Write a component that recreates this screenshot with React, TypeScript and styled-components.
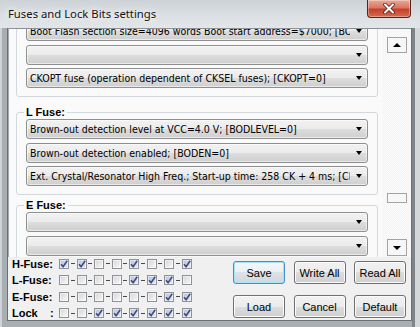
import React from "react";
import styled, { createGlobalStyle } from "styled-components";

const GlobalStyle = createGlobalStyle`
  *, *::before, *::after { box-sizing: border-box; }
  html, body { margin: 0; padding: 0; }
  body {
    width: 420px;
    height: 327px;
    overflow: hidden;
    font-family: "Liberation Sans", Arial, sans-serif;
    font-size: 11px;
    color: #000;
  }
`;

const Window = styled.div`
  width: 420px;
  height: 327px;
  display: flex;
  flex-direction: column;
  background: #aab0b6;
`;

const TitleBar = styled.div`
  height: 28px;
  flex: none;
  display: flex;
  align-items: flex-start;
  justify-content: space-between;
  padding: 0 9px 0 8px;
  background: linear-gradient(to bottom, #cdd2d7 0%, #dbdfe3 55%, #e3e6e9 100%);
`;

const Title = styled.div`
  font-family: "Noto Sans", "Open Sans", sans-serif;
  font-size: 11.3px;
  line-height: 28px;
  color: #151515;
  text-shadow: 0 0 6px #ffffff, 0 0 10px #ffffff;
`;

const CloseButton = styled.div`
  width: 44px;
  height: 18px;
  border: 1px solid #54241b;
  border-top: none;
  border-radius: 0 0 4px 4px;
  background: linear-gradient(to bottom, #e9a898 0%, #db7563 45%, #c4412b 55%, #d56a50 100%);
  box-shadow: inset 0 0 0 1px rgba(255, 255, 255, 0.35);
  display: flex;
  align-items: center;
  justify-content: center;
`;

const FrameBody = styled.div`
  flex: 1;
  min-height: 0;
  display: flex;
  padding: 0 8px 6px 7px;
  background:
    linear-gradient(to right, #d0d4d8 0 2px, transparent 2px),
    linear-gradient(to left, #d4d7da 0 5px, #7f8489 5px 8px, transparent 8px),
    #a9aeb3;
`;

const Client = styled.div`
  flex: 1;
  min-width: 0;
  display: flex;
  flex-direction: column;
  background: #f0f0f0;
  border: 1px solid #6b7075;
  border-top: none;
`;

const ScrollPanel = styled.div`
  height: 229px;
  flex: none;
  display: flex;
  border-top: 1px solid #8d9196;
  border-left: 1px solid #a5a9ad;
  background: #fafafa;
`;

const Viewport = styled.div`
  flex: 1;
  min-width: 0;
  overflow: hidden;
`;

const ScrollContent = styled.div<{ $offset: number }>`
  margin-top: ${(p) => -p.$offset}px;
  padding: 0 5px 0 7px;
  display: flex;
  flex-direction: column;
`;

const Group = styled.fieldset<{ $gap: number }>`
  margin: ${(p) => p.$gap}px 0 0 0;
  padding: 0 9px 8px 9px;
  border: 1px solid #d3d8dc;
  border-radius: 3px;
  min-width: 0;
`;

const Legend = styled.legend`
  padding: 0 2px;
  margin-left: -2px;
  font-weight: bold;
  font-size: 11px;
  line-height: 14px;
`;

const ComboList = styled.div`
  display: flex;
  flex-direction: column;
  gap: 3.5px;
`;

const Combo = styled.div`
  height: 20px;
  display: flex;
  align-items: center;
  border: 1px solid #8e8f8f;
  border-radius: 3px;
  background: linear-gradient(to bottom, #f2f2f2 0%, #ebebeb 50%, #dddddd 50%, #cfcfcf 100%);
  box-shadow: inset 0 0 0 1px rgba(255, 255, 255, 0.55);
`;

const ComboText = styled.span`
  flex: 1;
  min-width: 0;
  overflow: hidden;
  white-space: nowrap;
  padding-left: 3px;
  font-family: "DejaVu Sans Condensed", "DejaVu Sans", sans-serif;
  font-stretch: condensed;
  font-size: 10.5px;
  line-height: 18px;
`;

const ComboArrow = styled.span`
  width: 17px;
  flex: none;
  display: flex;
  align-items: center;
  padding-left: 6px;
  &::before {
    content: "";
    border-left: 3.5px solid transparent;
    border-right: 3.5px solid transparent;
    border-top: 4px solid #000;
  }
`;

const ScrollBar = styled.div`
  width: 28px;
  flex: none;
  display: flex;
  flex-direction: column;
  padding: 8px 4px 1px 4px;
  background: repeating-conic-gradient(#f3f3f3 0 25%, #fcfcfc 0 50%) 0 0 / 2px 2px;
`;

const ScrollButton = styled.div<{ $dir: "up" | "down" }>`
  height: ${(p) => (p.$dir === "up" ? 16 : 17)}px;
  flex: none;
  border: 1px solid #a3a3a3;
  background: #f7f7f7;
  display: flex;
  align-items: center;
  justify-content: center;
  &::before {
    content: "";
    border-left: 4px solid transparent;
    border-right: 4px solid transparent;
    ${(p) => (p.$dir === "up" ? "border-bottom: 4px solid #000;" : "border-top: 4px solid #000;")}
  }
`;

const Track = styled.div`
  flex: 1;
`;

const Thumb = styled.div`
  height: 10px;
  border: 1px solid #a3a3a3;
  background: #f7f7f7;
`;

const Bottom = styled.div`
  flex: 1;
  display: flex;
  justify-content: space-between;
  padding: 0 5px 0 4px;
`;

const CheckGrid = styled.div`
  display: grid;
  grid-auto-rows: 13px;
  row-gap: 3.5px;
  align-content: start;
`;

const CheckRow = styled.div`
  display: flex;
  align-items: center;
`;

const RowLabel = styled.span`
  width: 47px;
  flex: none;
  font-weight: bold;
  font-size: 11px;
  white-space: pre;
`;

const Box = styled.span<{ $checked: boolean }>`
  width: 10px;
  height: 10px;
  flex: none;
  border: 1px solid #8f9297;
  background: ${(p) =>
    p.$checked
      ? "linear-gradient(135deg, #b8c2d6 0%, #e4e8f0 100%)"
      : "linear-gradient(135deg, #d4d5d7 0%, #f9f9f9 100%)"};
  box-shadow: inset 0 0 0 1px rgba(255, 255, 255, 0.5);
  display: flex;
  align-items: center;
  justify-content: center;
`;

const Link = styled.span`
  width: 7.5px;
  height: 10px;
  flex: none;
  display: flex;
  align-items: center;
  justify-content: center;
  &::before {
    content: "";
    width: 4px;
    height: 1px;
    background: #4a4a4a;
  }
`;

const ButtonGrid = styled.div`
  display: grid;
  grid-template-columns: repeat(3, 52px);
  grid-auto-rows: 23px;
  column-gap: 8.5px;
  row-gap: 11px;
  margin-top: 4px;
`;

const Button = styled.button<{ $default?: boolean }>`
  margin: 0;
  padding: 0;
  font-family: "Liberation Sans", Arial, sans-serif;
  font-size: 11px;
  color: #000;
  border-radius: 3px;
  border: 1px solid ${(p) => (p.$default ? "#4a8cc4" : "#707070")};
  background: ${(p) =>
    p.$default
      ? "linear-gradient(to bottom, #f4f8fa 0%, #eaeff2 50%, #dce3e8 50%, #cfd7dd 100%)"
      : "linear-gradient(to bottom, #f2f2f2 0%, #ebebeb 50%, #dddddd 50%, #cfcfcf 100%)"};
  box-shadow: inset 0 0 0 1px ${(p) => (p.$default ? "#a6e2f8" : "#fbfbfb")};
`;

type FuseGroup = { name?: string; items: string[]; gap: number };

const groups: FuseGroup[] = [
  {
    items: [
      "Boot Flash section size=4096 words Boot start address=$7000; [BOOTSZ=00]",
      "",
      "CKOPT fuse (operation dependent of CKSEL fuses); [CKOPT=0]",
    ],
    gap: 0,
  },
  {
    name: "L Fuse:",
    items: [
      "Brown-out detection level at VCC=4.0 V; [BODLEVEL=0]",
      "Brown-out detection enabled; [BODEN=0]",
      "Ext. Crystal/Resonator High Freq.; Start-up time: 258 CK + 4 ms; [CKSEL=1110 SUT=00]",
    ],
    gap: 8,
  },
  { name: "E Fuse:", items: ["", ""], gap: 3 },
];

const bitRows: { label: string; bits: number[] }[] = [
  { label: "H-Fuse:", bits: [1, 1, 0, 0, 1, 0, 0, 1] },
  { label: "L-Fuse:", bits: [0, 0, 0, 0, 1, 1, 1, 0] },
  { label: "E-Fuse:", bits: [0, 0, 0, 0, 0, 0, 1, 1] },
  { label: "Lock    :", bits: [0, 0, 1, 1, 1, 1, 1, 1] },
];

const CheckMark = () => (
  <svg width="8" height="8" viewBox="0 0 8 8">
    <path d="M1 4.2 L3.1 6.6 L7.2 0.8" fill="none" stroke="#3b4d86" strokeWidth="1.6" />
  </svg>
);

const CloseGlyph = () => (
  <svg width="14" height="11" viewBox="0 0 14 11">
    <path d="M3 1.5 L11 9.5 M11 1.5 L3 9.5" stroke="#5b1e14" strokeWidth="3.6" strokeLinecap="round" />
    <path d="M3 1.5 L11 9.5 M11 1.5 L3 9.5" stroke="#ffffff" strokeWidth="2" strokeLinecap="round" />
  </svg>
);

export default function App() {
  return (
    <>
      <GlobalStyle />
      <Window>
        <TitleBar>
          <Title>Fuses and Lock Bits settings</Title>
          <CloseButton>
            <CloseGlyph />
          </CloseButton>
        </TitleBar>
        <FrameBody>
          <Client>
            <ScrollPanel>
              <Viewport>
                <ScrollContent $offset={9}>
                  {groups.map((g, gi) => (
                    <Group key={gi} $gap={g.gap}>
                      {g.name && <Legend>{g.name}</Legend>}
                      <ComboList>
                        {g.items.map((t, i) => (
                          <Combo key={i}>
                            <ComboText>{t}</ComboText>
                            <ComboArrow />
                          </Combo>
                        ))}
                      </ComboList>
                    </Group>
                  ))}
                </ScrollContent>
              </Viewport>
              <ScrollBar>
                <ScrollButton $dir="up" />
                <Track>
                  <Thumb style={{ marginTop: 140 }} />
                </Track>
                <ScrollButton $dir="down" />
              </ScrollBar>
            </ScrollPanel>
            <Bottom>
              <CheckGrid>
                {bitRows.map((r) => (
                  <CheckRow key={r.label}>
                    <RowLabel>{r.label}</RowLabel>
                    {r.bits.map((b, i) => (
                      <React.Fragment key={i}>
                        {i > 0 && <Link />}
                        <Box $checked={!!b}>{b ? <CheckMark /> : null}</Box>
                      </React.Fragment>
                    ))}
                  </CheckRow>
                ))}
              </CheckGrid>
              <ButtonGrid>
                <Button $default>Save</Button>
                <Button>Write All</Button>
                <Button>Read All</Button>
                <Button>Load</Button>
                <Button>Cancel</Button>
                <Button>Default</Button>
              </ButtonGrid>
            </Bottom>
          </Client>
        </FrameBody>
      </Window>
    </>
  );
}
